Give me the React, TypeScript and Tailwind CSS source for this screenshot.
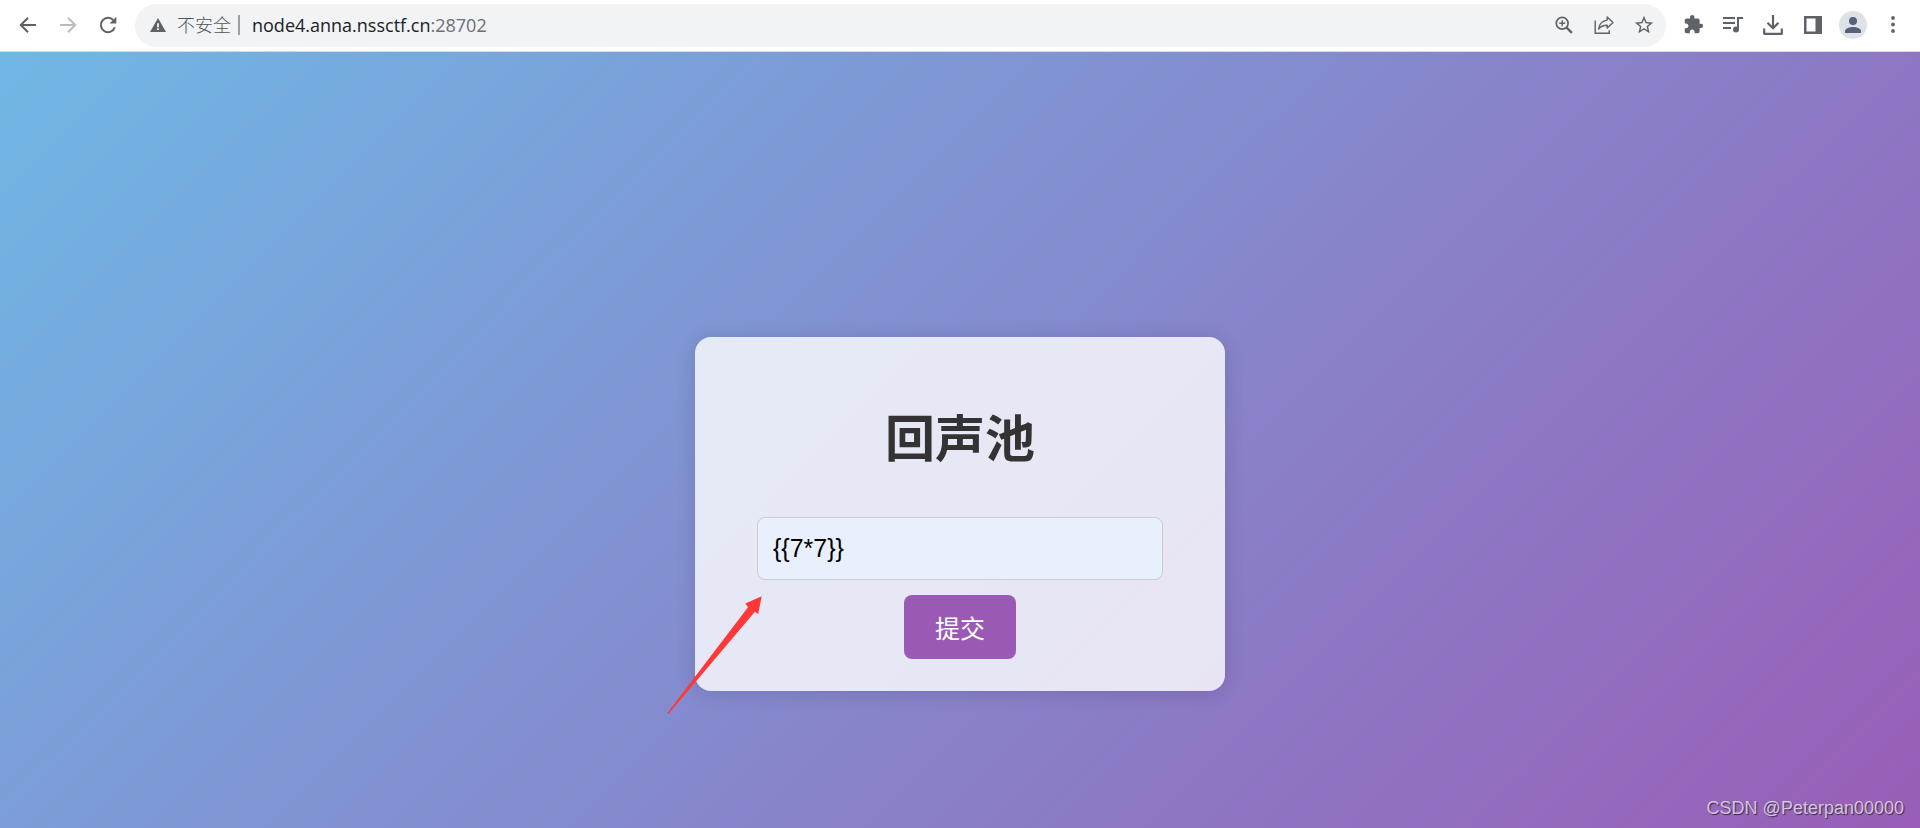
import { useState } from "react";
import type { FormEvent, ReactNode } from "react";

type IconButtonProps = {
  label: string;
  disabled?: boolean;
  children: ReactNode;
};

function IconButton({ label, disabled, children }: IconButtonProps) {
  return (
    <button
      type="button"
      aria-label={label}
      disabled={disabled}
      className="flex h-7 w-7 shrink-0 items-center justify-center text-[#5f6368] disabled:text-[#babcbe]"
    >
      {children}
    </button>
  );
}

function Toolbar() {
  return (
    <header className="flex h-[52px] items-center border-b border-[#dadce0] bg-white pl-[14px] pr-[13px]">
      <nav className="flex gap-3 pb-0.5">
        <IconButton label="后退">
          <svg width="18" height="18" viewBox="0 0 18 18" fill="none" stroke="currentColor" strokeWidth="2">
            <path d="M17 9H2M9 1.7 1.8 9 9 16.3" />
          </svg>
        </IconButton>
        <IconButton label="前进" disabled>
          <svg width="18" height="18" viewBox="0 0 18 18" fill="none" stroke="currentColor" strokeWidth="2">
            <path d="M1 9h15M9 1.7 16.2 9 9 16.3" />
          </svg>
        </IconButton>
        <IconButton label="重新加载">
          <svg width="18" height="18" viewBox="0 0 18 18" fill="none">
            <path d="M15.9 11.3A7.2 7.2 0 1 1 14.3 4" stroke="currentColor" strokeWidth="2" />
            <path d="M17.3 .8v6.7h-6.7z" fill="currentColor" />
          </svg>
        </IconButton>
      </nav>

      <div className="ml-[13px] flex h-[43px] min-w-0 flex-1 items-center rounded-full bg-[#f1f3f4] pl-[15px] pr-2 pb-0.5">
        <svg className="shrink-0" width="16" height="14" viewBox="0 0 16 14">
          <path d="M8 0 16 14H0z" fill="#5f6368" />
          <path d="M7.1 5.2h1.8v4H7.1zM7.1 10.3h1.8V12H7.1z" fill="#f1f3f4" />
        </svg>
        <span className="ml-[11px] whitespace-nowrap text-[18px] font-light leading-6 text-[#50545a]">不安全</span>
        <span className="ml-[7px] h-5 w-0.5 shrink-0 bg-[#9aa0a6]" />
        <p className="ml-3 min-w-0 flex-1 truncate text-[18px] leading-6 text-[#202124]">
          node4.anna.nssctf.cn<span className="text-[#6b6f74]">:28702</span>
        </p>
        <div className="flex gap-3">
          <IconButton label="缩放">
            <svg width="18" height="18" viewBox="0 0 18 18" fill="none" stroke="currentColor">
              <circle cx="7.2" cy="7.2" r="5.9" strokeWidth="1.7" />
              <path d="m11.5 11.5 5.4 5.4" strokeWidth="2.4" />
              <path d="M7.2 4.2v6M4.2 7.2h6" strokeWidth="1.4" />
            </svg>
          </IconButton>
          <IconButton label="分享">
            <svg width="20" height="18" viewBox="0 0 20 18" fill="none" stroke="currentColor" strokeWidth="1.4">
              <path d="M1.2 4.5v12.8h14v-3" />
              <path d="M13.2 .9 19 6.500l-5.800 5.600V9.200c-4 0-6.600 1-8.600 3.800.6-4.400 3.600-8.200 8.600-8.900z" strokeLinejoin="round" />
            </svg>
          </IconButton>
          <IconButton label="收藏">
            <svg width="22" height="22" viewBox="0 0 24 24" fill="currentColor">
              <path d="m22 9.24-7.19-.62L12 2 9.19 8.63 2 9.24l5.46 4.73L5.82 21 12 17.27 18.18 21l-1.63-7.03L22 9.24zM12 15.4l-3.76 2.27 1-4.28-3.32-2.88 4.38-.38L12 6.1l1.71 4.04 4.38.38-3.32 2.88 1 4.28L12 15.4z" />
            </svg>
          </IconButton>
        </div>
      </div>

      <div className="ml-[13px] flex gap-3 pb-0.5">
        <IconButton label="扩展程序">
          <svg width="21" height="21" viewBox="0 0 24 24" fill="currentColor">
            <path d="M20.5 11H19V7c0-1.1-.9-2-2-2h-4V3.5a2.5 2.5 0 0 0-5 0V5H4c-1.1 0-1.99.9-1.99 2v3.8H3.5c1.49 0 2.7 1.21 2.7 2.7s-1.21 2.7-2.7 2.7H2V20c0 1.1.9 2 2 2h3.8v-1.5c0-1.49 1.21-2.7 2.7-2.7s2.7 1.21 2.7 2.7V22H17c1.1 0 2-.9 2-2v-4h1.5a2.5 2.5 0 0 0 0-5z" />
          </svg>
        </IconButton>
        <IconButton label="媒体控制">
          <svg width="20" height="17" viewBox="0 0 20 17" fill="none" stroke="currentColor" strokeWidth="2">
            <path d="M0 2h12M0 7h12M0 12h8" />
            <path d="M15 13V2h5" />
            <circle cx="13" cy="13.5" r="3" fill="currentColor" stroke="none" />
          </svg>
        </IconButton>
        <IconButton label="下载">
          <svg width="20" height="20" viewBox="0 0 20 20" fill="none" stroke="currentColor" strokeWidth="2.2">
            <path d="M10 0v13M4.5 7.8 10 13.300l5.500-5.500" />
            <path d="M1.2 13.500v5.300h17.600v-5.300" strokeLinejoin="round" />
          </svg>
        </IconButton>
        <IconButton label="侧边栏">
          <svg width="18" height="18" viewBox="0 0 18 18">
            <path d="M0 0h18v18H0zM2.5 2.5v13h9v-13z" fill="currentColor" fillRule="evenodd" />
          </svg>
        </IconButton>
        <button
          type="button"
          aria-label="用户"
          className="flex h-7 w-7 shrink-0 items-center justify-center rounded-full bg-[#dee1e6] text-[#56617a]"
        >
          <svg width="16" height="16" viewBox="0 0 16 16" fill="currentColor">
            <circle cx="8" cy="4" r="4" />
            <path d="M0 16v-2c0-2.7 5.3-4 8-4s8 1.300 8 4v2z" />
          </svg>
        </button>
        <IconButton label="菜单">
          <svg width="4" height="17" viewBox="0 0 4 17" fill="currentColor">
            <circle cx="2" cy="2" r="1.9" />
            <circle cx="2" cy="8.5" r="1.9" />
            <circle cx="2" cy="15" r="1.9" />
          </svg>
        </IconButton>
      </div>
    </header>
  );
}

export default function App() {
  const [text, setText] = useState("{{7*7}}");

  const handleSubmit = (e: FormEvent) => {
    e.preventDefault();
  };

  return (
    <div className="flex min-h-screen flex-col font-['Open_Sans','Noto_Sans_CJK_SC',sans-serif]">
      <Toolbar />
      <main className="relative flex flex-1 flex-col items-center bg-[linear-gradient(135deg,#70b7e6,#9b59b6_105%)] px-4 pt-[285px] pb-20">
        <form
          onSubmit={handleSubmit}
          className="relative flex w-full max-w-[530px] flex-col items-center rounded-2xl bg-white/80 px-[62px] pt-[63px] pb-8 shadow-[0_2px_20px_rgba(0,0,0,0.14)]"
        >
          <h1 className="text-[50px] font-bold leading-[76px] text-[#333]">
            <label htmlFor="echo">回声池</label>
          </h1>
          <input
            id="echo"
            type="text"
            value={text}
            onChange={(e) => setText(e.target.value)}
            className="mt-[41px] h-[63px] w-full rounded-lg border border-[#ccc] bg-[#e8f0fe] px-[15px] font-['Liberation_Sans',sans-serif] text-[25px] text-black"
          />
          <button
            type="submit"
            className="mt-[15px] h-16 rounded-lg bg-[#9b59b6] px-[31px] pt-0.5 text-[25px] leading-8 text-white"
          >
            提交
          </button>
          <svg className="absolute -bottom-6 -left-7" width="96" height="120" viewBox="0 0 96 120" fill="#ff3838">
            <path d="M94.7 1.300 78.300 8.600 81 12.200.4 118l1 1L87.900 16.700l3.300 2.400z" />
          </svg>
        </form>
        <p className="absolute right-4 bottom-2 font-['Liberation_Sans',sans-serif] text-[18px] leading-6 text-white/70 [text-shadow:1px_1px_1px_rgba(0,0,0,0.6)]">
          CSDN @Peterpan00000
        </p>
      </main>
    </div>
  );
}
